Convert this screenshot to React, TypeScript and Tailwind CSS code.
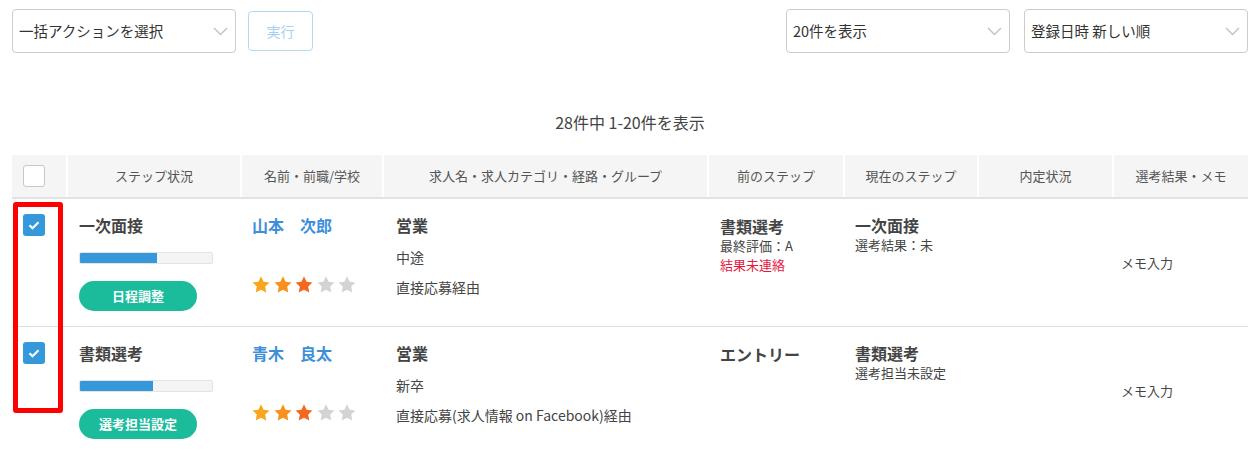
import React from "react";

interface rowData {
  step: string;
  progress: number;
  action: string;
  name: string;
  stars: number;
  job: string;
  jobType: string;
  route: string;
  prevStep: string;
  prevNotes: { text: string; red?: boolean }[];
  curStep: string;
  curNote: string;
}

const ROWS: Array<rowData> = [
  {
    step: "一次面接",
    progress: 77,
    action: "日程調整",
    name: "山本　次郎",
    stars: 3,
    job: "営業",
    jobType: "中途",
    route: "直接応募経由",
    prevStep: "書類選考",
    prevNotes: [{ text: "最終評価：A" }, { text: "結果未連絡", red: true }],
    curStep: "一次面接",
    curNote: "選考結果：未",
  },
  {
    step: "書類選考",
    progress: 73,
    action: "選考担当設定",
    name: "青木　良太",
    stars: 3,
    job: "営業",
    jobType: "新卒",
    route: "直接応募(求人情報 on Facebook)経由",
    prevStep: "エントリー",
    prevNotes: [],
    curStep: "書類選考",
    curNote: "選考担当未設定",
  },
];

const STAR_COLORS = ["#f9a51f", "#f7901e", "#f26a21"];

const Chevron = () => (
  <svg width="15" height="9" viewBox="0 0 15 9" className="shrink-0">
    <path d="M1 1l6.5 6.5L14 1" fill="none" stroke="#c4c4c4" strokeWidth="1.5" />
  </svg>
);

const Select = ({ label }: { label: string }) => (
  <div className="w-[224px] h-[44px] border border-[#cccccc] rounded-[4px] flex items-center justify-between pl-[6px] pr-[7px] bg-white">
    <span className="text-[14.5px] text-[#333]">{label}</span>
    <Chevron />
  </div>
);

const Star = ({ color }: { color: string }) => (
  <svg width="18" height="17" viewBox="0 0 24 23">
    <path
      d="M12 0.5l3.5 7.2 8 1.1-5.8 5.5 1.4 7.9L12 18.5l-7.1 3.7 1.4-7.9L0.5 8.8l8-1.1z"
      fill={color}
    />
  </svg>
);

const Checkbox = ({ checked }: { checked?: boolean }) =>
  checked ? (
    <div className="w-[22px] h-[22px] rounded-[3px] bg-[#3498db] flex items-center justify-center">
      <svg width="12" height="10" viewBox="0 0 12 10">
        <path d="M1.5 5.2l3 3 6-6" fill="none" stroke="white" strokeWidth="2.2" />
      </svg>
    </div>
  ) : (
    <div className="w-[22px] h-[22px] rounded-[3px] bg-white border border-[#c8c8c8]" />
  );

const HEADERS = [
  "",
  "ステップ状況",
  "名前・前職/学校",
  "求人名・求人カテゴリ・経路・グループ",
  "前のステップ",
  "現在のステップ",
  "内定状況",
  "選考結果・メモ",
];

const COLS = "grid grid-cols-[56px_174px_142px_325px_136px_134px_135px_134px]";

const Row = ({ data }: { data: rowData }) => (
  <div className={`${COLS} h-[128px] border-b border-[#e0e0e0]`}>
    <div className="pl-[11px] pt-[15px]">
      <Checkbox checked />
    </div>

    {/* step */}
    <div className="pl-[11px] pt-[16px]">
      <p className="text-[16px] leading-5 font-bold text-[#444]">{data.step}</p>
      <div className="mt-[17px] w-[134px] h-[12px] bg-[#f4f4f4] border border-[#e4e4e4] rounded-[2px] overflow-hidden">
        <div className="h-full bg-[#3498db]" style={{ width: `${data.progress}px` }} />
      </div>
      <div className="mt-[17px] w-[118px] h-[30px] rounded-full bg-[#1abc9c] flex items-center justify-center text-white text-[13px] font-bold">
        {data.action}
      </div>
    </div>

    {/* name */}
    <div className="pl-[10px] pt-[16px]">
      <p className="text-[16px] leading-5 font-bold text-[#3d8fdb] whitespace-pre">{data.name}</p>
      <div className="mt-[41px] flex gap-[3.5px]">
        {[0, 1, 2, 3, 4].map((i) => (
          <Star key={i} color={i < data.stars ? STAR_COLORS[i] : "#d3d3d3"} />
        ))}
      </div>
    </div>

    {/* job */}
    <div className="pl-[12px] pt-[16px] text-[#444]">
      <p className="text-[16px] leading-5 font-bold">{data.job}</p>
      <p className="mt-[12px] text-[14px] leading-5">{data.jobType}</p>
      <p className="mt-[10px] text-[14px] leading-5">{data.route}</p>
    </div>

    {/* prev step */}
    <div className="pl-[11px] pt-[17px] text-[#444]">
      <p className="text-[16px] leading-5 font-bold">{data.prevStep}</p>
      {data.prevNotes.map((n) => (
        <p key={n.text} className={`text-[13px] leading-[19px] ${n.red ? "text-[#e8173f]" : ""}`}>
          {n.text}
        </p>
      ))}
    </div>

    {/* current step */}
    <div className="pl-[10px] pt-[16px] text-[#444]">
      <p className="text-[16px] leading-5 font-bold">{data.curStep}</p>
      <p className="text-[13px] leading-[20px]">{data.curNote}</p>
    </div>

    <div />

    {/* memo */}
    <div className="pl-[7px] flex items-center text-[13px] text-[#444]">メモ入力</div>
  </div>
);

const App = () => {
  return (
    <div
      className="relative w-[1260px] h-[451px] overflow-hidden bg-white"
      style={{ fontFamily: '"Noto Sans CJK JP", "Noto Sans", sans-serif' }}
    >
      {/* Toolbar */}
      <div className="flex items-center justify-between px-[12px] pt-[9px]">
        <div className="flex items-center gap-[12px]">
          <Select label="一括アクションを選択" />
          <button className="w-[65px] h-[40px] border border-[#b3daf5] rounded-[4px] text-[14px] text-[#a6d2f0] bg-white">
            実行
          </button>
        </div>
        <div className="flex items-center gap-[14px]">
          <Select label="20件を表示" />
          <Select label="登録日時 新しい順" />
        </div>
      </div>

      <p className="mt-[58px] mb-[22px] text-center text-[16px] leading-[22px] text-[#444]">
        28件中 1-20件を表示
      </p>

      {/* Table */}
      <div className="mx-[12px]">
        <div className={`${COLS} h-[44px] bg-[#f5f5f5] border-b-2 border-[#e2e2e2]`}>
          {HEADERS.map((h, i) => (
            <div
              key={i}
              className={`flex items-center ${i === 0 ? "pl-[11px]" : "justify-center"} ${
                i < HEADERS.length - 1 ? "border-r-2 border-white" : ""
              } text-[13px] text-[#555]`}
            >
              {i === 0 ? <Checkbox /> : h}
            </div>
          ))}
        </div>
        {ROWS.map((r) => (
          <Row key={r.name} data={r} />
        ))}
      </div>

      {/* highlight */}
      <div className="absolute left-[13px] top-[202px] w-[50px] h-[211px] border-[5px] border-[#ff0000] rounded-[3px]" />
    </div>
  );
};

export default App;
